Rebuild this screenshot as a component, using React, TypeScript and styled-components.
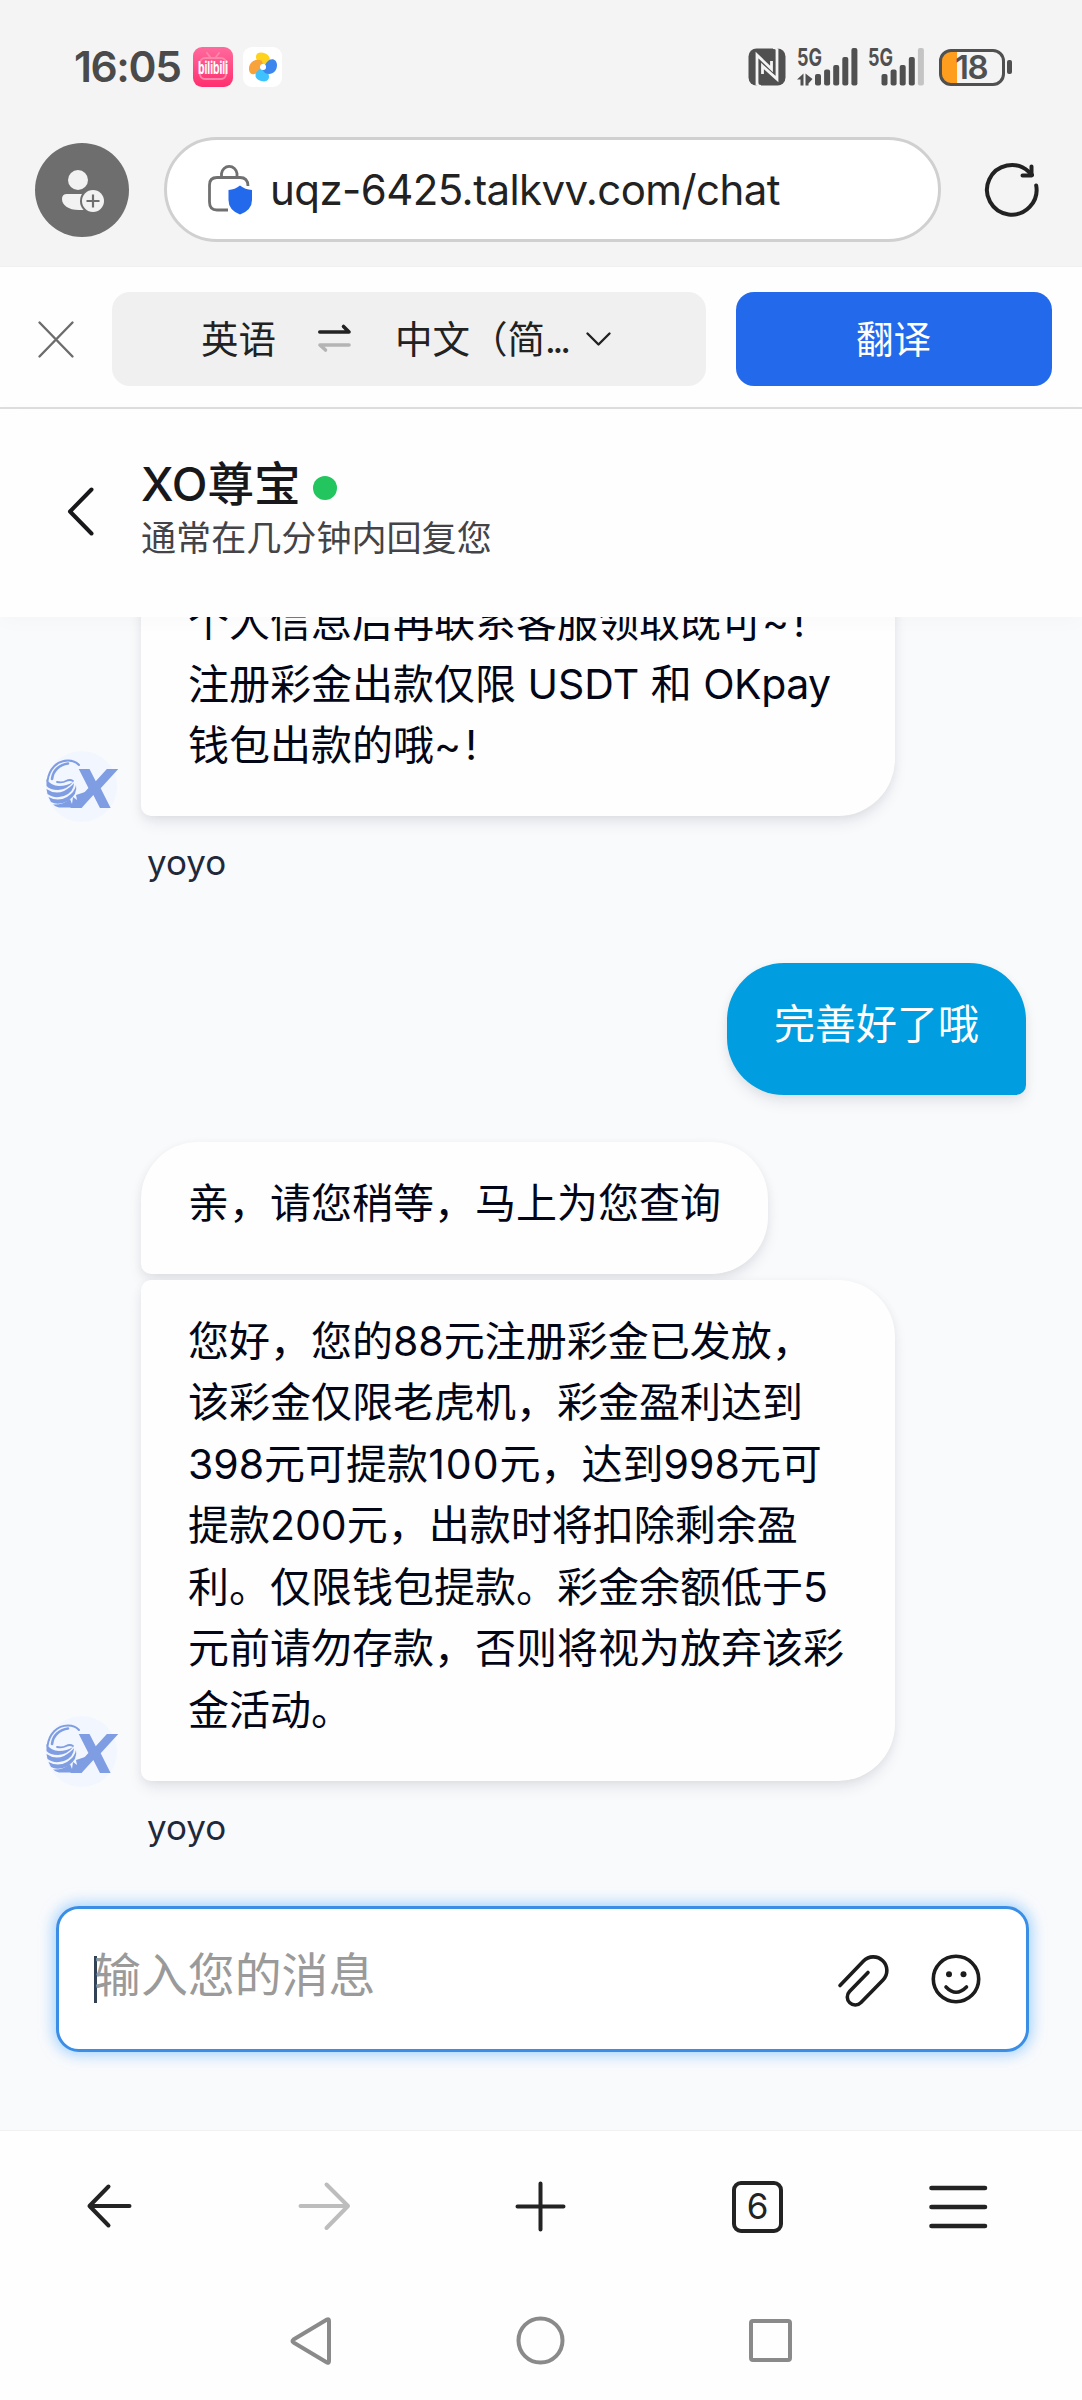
import React from "react";
import styled, { createGlobalStyle } from "styled-components";

const SANS = `Inter, "Noto Sans CJK SC", sans-serif`;

const GlobalStyle = createGlobalStyle`
  * { box-sizing: border-box; }
  body {
    margin: 0;
    background: #fefefe;
    font-family: ${SANS};
    -webkit-font-smoothing: antialiased;
  }
  svg { display: block; flex: none; overflow: visible; }
`;

const Screen = styled.div`
  width: 1082px;
  height: 2400px;
  display: flex;
  flex-direction: column;
  overflow: hidden;
  background: #fefefe;
`;

/* ---------- status bar ---------- */

const BrowserTop = styled.header`
  height: 267px;
  flex: none;
  background: #f4f4f4;
  border-bottom: 1px solid #f0f0f0;
`;

const StatusBar = styled.div`
  height: 134px;
  padding: 0 70px 0 74px;
  display: flex;
  align-items: center;
`;

const Clock = styled.span`
  width: 119px;
  font-size: 42.5px;
  line-height: 60px;
  font-weight: 600;
  letter-spacing: -1.4px;
  color: #4a4a4a;
  white-space: nowrap;
`;

const AppIcons = styled.div`
  display: flex;
  gap: 10px;
  flex: 1;
`;

const StatusIcons = styled.div`
  display: flex;
  align-items: center;
`;

const Signal = styled.div<{ $gap: number }>`
  margin-left: ${(p) => p.$gap}px;
`;

const Battery = styled.div`
  width: 66px;
  height: 37px;
  margin-left: 15px;
  padding-right: 2px;
  border: 3px solid #505050;
  border-radius: 12px;
  display: flex;
  align-items: center;
  justify-content: center;
  background: linear-gradient(90deg, #ff9d1e 15px, transparent 15px);
  color: #505050;
  font-size: 33px;
  line-height: 31px;
  font-weight: 600;
  letter-spacing: -1.6px;
`;

const BatteryTip = styled.i`
  width: 5px;
  height: 14px;
  margin-left: 2px;
  border-radius: 2px;
  background: #505050;
`;

/* ---------- address row ---------- */

const AddressRow = styled.div`
  display: flex;
  align-items: center;
  padding: 3px 42px 0 35px;
`;

const Profile = styled.div`
  width: 94px;
  height: 94px;
  border-radius: 50%;
  background: #6e6e6e;
`;

const AddressPill = styled.div`
  width: 777px;
  height: 105px;
  margin: 0 44px 0 35px;
  padding-left: 41px;
  display: flex;
  align-items: center;
  border: 3px solid #d0d0d0;
  border-radius: 53px;
  background: #fff;
`;

const Url = styled.span`
  margin-left: 16px;
  font-size: 42px;
  letter-spacing: -0.58px;
  color: #222;
  white-space: nowrap;
`;

/* ---------- translate bar ---------- */

const TranslateBar = styled.div`
  height: 142px;
  flex: none;
  display: flex;
  align-items: flex-start;
  padding: 25px 30px 0 38px;
  border-bottom: 2px solid #dedede;
`;

const CloseSlot = styled.div`
  height: 94px;
  width: 74px;
  display: flex;
  align-items: center;
`;

const Languages = styled.div`
  width: 594px;
  height: 94px;
  padding-left: 89px;
  display: flex;
  align-items: center;
  border-radius: 18px;
  background: #f0f0f0;
  color: #222;
  font-size: 37.5px;
  white-space: nowrap;
`;

const Language = styled.span`
  padding-bottom: 5px;
`;

const Ellipsis = styled.span`
  letter-spacing: -3.2px;
`;

const SwapSlot = styled.div`
  margin: 0 44px 0 42px;
`;

const ChevronSlot = styled.div`
  margin-left: 18px;
`;

const TranslateButton = styled.button`
  width: 316px;
  height: 94px;
  margin-left: 30px;
  padding: 0 1px 5px 0;
  border: 0;
  border-radius: 18px;
  background: #2369ec;
  color: #fff;
  font: 400 37.5px ${SANS};
`;

/* ---------- chat header ---------- */

const ChatHeader = styled.div`
  height: 208px;
  flex: none;
  display: flex;
  padding: 46px 0 0 66px;
  position: relative;
  background: #fefefe;
  box-shadow: 0 4px 20px rgba(30, 40, 60, 0.025);
`;

const BackSlot = styled.div`
  width: 75px;
  padding-top: 32px;
`;

const Title = styled.div`
  display: flex;
  align-items: center;
  height: 58px;
  color: #18181b;
  font-size: 46.6px;
  line-height: 58px;
  font-weight: 500;
  white-space: nowrap;
`;

const OnlineDot = styled.i`
  width: 24px;
  height: 24px;
  margin: 8px 0 0 12px;
  border-radius: 50%;
  background: #22c55e;
`;

const Subtitle = styled.div`
  height: 50px;
  color: #434348;
  font-size: 35.1px;
  line-height: 50px;
  white-space: nowrap;
`;

/* ---------- conversation ---------- */

const Conversation = styled.main`
  height: 1514px;
  flex: none;
  display: flex;
  flex-direction: column;
  overflow: hidden;
  background: #f9fafc;
  border-bottom: 1px solid #f1f1f2;
`;

const Incoming = styled.section<{ $top: number }>`
  margin: ${(p) => p.$top}px 0 0 46px;
  display: grid;
  grid-template-columns: 71px auto;
  column-gap: 24px;
  align-items: end;
  flex: none;
`;

const AvatarSlot = styled.div`
  height: 65px;
`;

const Stack = styled.div`
  display: flex;
  flex-direction: column;
  align-items: flex-start;
  gap: 6px;
`;

const Bubble = styled.div<{ $radius: string; $width: number; $mine?: boolean }>`
  width: ${(p) => p.$width}px;
  padding: 31px 0 39.5px 47px;
  border-radius: ${(p) => p.$radius};
  background: ${(p) => (p.$mine ? "#009de0" : "#fefefe")};
  color: ${(p) => (p.$mine ? "#fff" : "#020617")};
  box-shadow: 0 8px 16px -2px rgba(20, 25, 40, 0.09),
    0 2px 10px rgba(20, 25, 40, 0.05);
  font-size: 41px;
  line-height: 61.5px;
  white-space: pre;
`;

const Tracked = styled.span<{ $spacing: number }>`
  letter-spacing: ${(p) => p.$spacing}px;
`;

const Author = styled.div`
  grid-column: 2;
  height: 48px;
  margin: 22px 0 0 6px;
  color: #1e293b;
  font-size: 35px;
  line-height: 48px;
`;

const Outgoing = styled.section`
  margin: 77px 56px 0 0;
  display: flex;
  justify-content: flex-end;
  flex: none;
`;

/* ---------- composer ---------- */

const Composer = styled.div`
  width: 973px;
  height: 146px;
  flex: none;
  margin: 55.5px 0 0 56px;
  padding: 0 45px 0 35px;
  display: flex;
  align-items: center;
  border: 3px solid #3b8ee6;
  border-radius: 23px;
  background: #fff;
  box-shadow: 0 0 14px 3px rgba(110, 185, 255, 0.6);
`;

const Caret = styled.i`
  width: 3px;
  height: 47px;
  margin-right: -3px;
  background: #334155;
`;

const Placeholder = styled.span`
  flex: 1;
  margin-top: -8px;
  color: #9a9a9a;
  font-size: 46.9px;
  line-height: 70px;
  white-space: nowrap;
`;

const ComposerTools = styled.div`
  display: flex;
  gap: 42px;
  padding-top: 2px;
`;

/* ---------- browser toolbar and system keys ---------- */

const Toolbar = styled.nav`
  height: 150px;
  flex: none;
  display: flex;
  align-items: center;
  padding: 0 94px 0 87px;
`;

const ToolSlot = styled.div<{ $left: number }>`
  margin-left: ${(p) => p.$left}px;
`;

const TabCount = styled.div`
  width: 52px;
  height: 52px;
  margin: 2px 0 0 166px;
  display: flex;
  align-items: center;
  justify-content: center;
  border: 4px solid #232323;
  border-radius: 9px;
  color: #232323;
  font-size: 35px;
  line-height: 44px;
  padding-bottom: 3px;
`;

const SystemKeys = styled.nav`
  display: flex;
  align-items: center;
  height: 122px;
  padding-left: 290px;
`;

/* ---------- drawings ---------- */

const BiliIcon = () => (
  <svg width="40" height="40" viewBox="0 0 40 40">
    <defs>
      <linearGradient id="bili" x1="0" y1="0" x2="0" y2="1">
        <stop offset="0" stopColor="#ff6a9d" />
        <stop offset="1" stopColor="#ff2f6f" />
      </linearGradient>
    </defs>
    <rect width="40" height="40" rx="9" fill="url(#bili)" />
    <g fill="none" stroke="#ff86ab" strokeWidth="2" strokeLinecap="round">
      <rect x="7" y="11" width="26" height="21" rx="5" />
      <path d="M14 6l3 4M26 6l-3 4" />
    </g>
    <text x="5" y="27" textLength="30" lengthAdjust="spacingAndGlyphs" fontFamily="Inter, sans-serif" fontWeight="700" fontSize="17" fill="#fff">
      bilibili
    </text>
  </svg>
);

const PinwheelIcon = () => (
  <svg width="39" height="40" viewBox="0 0 39 40">
    <rect width="39" height="40" rx="9" fill="#fff" />
    <path d="M17 17C10 10 13 5.500 18 5.500C25 5.500 28.500 11 26.500 17L23 19Q21 16 17 17Z" fill="#ffd21e" />
    <path d="M18 22C12 30 6 28 6 22C6 15 12 11 18.500 13.500L20 17Q16 18 18 22Z" fill="#f8a23c" />
    <path d="M23 23C29 30 25 34.500 21 34.500C13 34 11 29 13.500 25L18 21Q19 24 23 23Z" fill="#3fc3ff" />
    <path d="M22 18C27 9 34 12 34 18C34 25 28 29 22 26L19.500 23Q24 22 22 18Z" fill="#3d86ee" />
    <circle cx="20" cy="20" r="3" fill="#fff" />
  </svg>
);

const NfcIcon = () => (
  <svg width="38" height="38" viewBox="0 0 38 38">
    <rect x="0.500" y="0.500" width="37" height="37" rx="8" fill="#505050" />
    <path d="M9 37.500V7L23.500 21V13M29 0.500V31L14.500 18V26" fill="none" stroke="#f4f4f4" strokeWidth="2.800" />
    <path d="M9 36V34Q9 38 13 38M29 2Q29 0 25 0" fill="none" stroke="#f4f4f4" strokeWidth="2" />
  </svg>
);

const SignalIcon = ({ data, width }: { data?: boolean; width: number }) => {
  const tops = [26, 21.5, 17, 9, 0];
  const start = data ? 18 : 13.5;
  return (
    <svg width={width} height="38" viewBox={`0 0 ${width} 38`}>
      <text x="0" y="18" textLength="25" lengthAdjust="spacingAndGlyphs" fontFamily="Inter, sans-serif" fontWeight="700" fontSize="24" fill="#505050">
        5G
      </text>
      {tops.map((t, i) => (
        <rect
          key={t}
          x={start + i * 9.1}
          y={t}
          width="6"
          height={37.5 - t}
          rx="2"
          fill={!data && i === 4 ? "#c4c4c4" : "#505050"}
        />
      ))}
      {data && <path d="M0 31.500L6.500 25.500V37.500H3.500V31.500ZM8.500 25.500L15.500 31L11.500 35.500V37.500H8.500Z" fill="#505050" />}
    </svg>
  );
};

const ProfileIcon = () => (
  <svg width="94" height="94" viewBox="0 0 94 94">
    <circle cx="43" cy="37" r="10" fill="#f2f2f2" />
    <path d="M32 51H54V67H44C33 67 27 62 27 56Q27 51 32 51Z" fill="#f2f2f2" />
    <circle cx="58" cy="58" r="13" fill="#6e6e6e" />
    <circle cx="58" cy="58" r="11" fill="#f2f2f2" />
    <path d="M51.500 58H64.500M58 51.500V64.500" stroke="#6e6e6e" strokeWidth="2.200" />
  </svg>
);

const LockShieldIcon = () => (
  <svg width="46" height="51" viewBox="0 0 46 51">
    <path d="M13.500 13V9.500A7.800 8 0 0 1 29 9.500V13" fill="none" stroke="#707070" strokeWidth="2.800" />
    <path d="M40 22C40 16 37 13.500 32 13.500H9C4 13.500 1.500 16 1.500 21V38C1.500 43 4 46 9 46H20" fill="none" stroke="#707070" strokeWidth="2.800" />
    <path d="M32 21.500Q37 25.500 44 26V36Q44 46 32 50.500Q20.500 46 20.500 36V26Q27 25.500 32 21.500Z" fill="#2369ec" />
  </svg>
);

const ReloadIcon = () => (
  <svg width="54" height="54" viewBox="0 0 54 54" fill="none" stroke="#222" strokeWidth="4" strokeLinecap="round" strokeLinejoin="round">
    <path d="M51.200 22.500A24.800 24.800 0 1 1 43.500 8.500L47 12" />
    <path d="M46.500 3.500V12.500H37.500" />
  </svg>
);

const CloseIcon = () => (
  <svg width="36" height="37" viewBox="0 0 36 37" stroke="#6c6c6c" strokeWidth="2.400" strokeLinecap="round">
    <path d="M1.500 1.500L34.500 35.500M34.500 1.500L1.500 35.500" />
  </svg>
);

const SwapIcon = () => (
  <svg width="33" height="30" viewBox="0 0 33 30" fill="none" strokeWidth="3.600" strokeLinecap="round" strokeLinejoin="round">
    <path d="M1.800 8H31L25.500 2.500" stroke="#222" />
    <path d="M31 21H2L7.500 26" stroke="#b4b4b4" />
  </svg>
);

const ChevronIcon = () => (
  <svg width="25" height="14" viewBox="0 0 25 14" fill="none" stroke="#222" strokeWidth="2.400" strokeLinecap="round" strokeLinejoin="round">
    <path d="M1.500 1.500L12.500 12.500L23.500 1.500" />
  </svg>
);

const BackChevron = () => (
  <svg width="28" height="49" viewBox="0 0 28 49" fill="none" stroke="#18181b" strokeWidth="4" strokeLinecap="round" strokeLinejoin="round">
    <path d="M25.500 2.500L4 24.500L25.500 46.500" />
  </svg>
);

const TeamLogo = () => (
  <svg width="71" height="71" viewBox="0 0 71 71">
    <circle cx="35.500" cy="35.500" r="35.500" fill="#f2f6ff" />
    <g fill="none" stroke="#7f9de2" strokeLinecap="round">
      <path d="M1.500 30C3 18 11 9.500 22 9.500Q29 9.500 33 14" strokeWidth="2" />
      <path d="M6 28C7 19 14 13.500 22 12.500" strokeWidth="2.600" />
      <path d="M11 31Q17 32 20 30Q24 28 27 30" strokeWidth="1.800" />
    </g>
    <g fill="#7f9de2">
      <path d="M0.500 28Q5 35 13 35Q21 35 27 31Q22 38 12 39Q4 39 0.500 35Z" />
      <path d="M0.500 38Q9 44 18 40Q25 36 28 32Q28 41 18 45Q8 48 1.500 43Z" />
      <path d="M2.500 46Q12 51 21 46Q29 41 30 34Q32 43 22 50Q12 55 5 51Z" />
      <path d="M7 53.500Q17 54 24 48L26 53L27 46L31 49L30 44L39 41L36 56.500H13Q9 55.500 7 53.500Z" />
    </g>
    <text x="27" y="56.500" textLength="43" lengthAdjust="spacingAndGlyphs" fontFamily="'DejaVu Sans', sans-serif" fontWeight="700" fontStyle="italic" fontSize="54" fill="#7f9de2">
      X
    </text>
  </svg>
);

const ClipIcon = () => (
  <svg width="52" height="52" viewBox="0 0 52 52" fill="none" stroke="#1c1c1c" strokeWidth="3.600" strokeLinecap="round" strokeLinejoin="round">
    <path d="M3 31.500L26.500 7A13.300 13.300 0 0 1 46 26L24 48.500A7.500 7.500 0 0 1 12.500 37.500L31 18.500" />
  </svg>
);

const SmileIcon = () => (
  <svg width="50" height="50" viewBox="0 0 50 50" fill="none" stroke="#1c1c1c" strokeWidth="3.600" strokeLinecap="round">
    <circle cx="25" cy="25" r="22.700" />
    <path d="M15 33Q25 43.500 35.500 33" />
    <circle cx="18" cy="20.200" r="3" fill="#1c1c1c" stroke="none" />
    <circle cx="32.500" cy="20.200" r="3" fill="#1c1c1c" stroke="none" />
  </svg>
);

const ArrowLeftIcon = () => (
  <svg width="46" height="44" viewBox="0 0 46 44" fill="none" stroke="#232323" strokeWidth="4" strokeLinecap="round" strokeLinejoin="round">
    <path d="M42.500 22H2.500M21.500 2.500L2.500 22L21.500 41.500" />
  </svg>
);

const ArrowRightIcon = () => (
  <svg width="53" height="48" viewBox="0 0 53 48" fill="none" stroke="#bdbdbd" strokeWidth="4" strokeLinecap="round" strokeLinejoin="round">
    <path d="M2.500 24H50M28.500 2.500L50 24L28.500 46" />
  </svg>
);

const PlusIcon = () => (
  <svg width="51" height="51" viewBox="0 0 51 51" stroke="#232323" strokeWidth="4" strokeLinecap="round">
    <path d="M2.500 25.500H48.500M25.500 2.500V48.500" />
  </svg>
);

const MenuIcon = () => (
  <svg width="59" height="44" viewBox="0 0 59 44" stroke="#232323" strokeWidth="4.600" strokeLinecap="round">
    <path d="M2.500 4H56M2.500 23H56M2.500 42H56" />
  </svg>
);

const BackKey = () => (
  <svg width="42" height="48" viewBox="0 0 42 48" fill="none" stroke="#8a8a8a" strokeWidth="4" strokeLinejoin="round">
    <path d="M37 2.500Q39 1.500 39 4V44Q39 46.500 37 45.500L3.500 25.500Q1.500 24 3.500 22.500Z" />
  </svg>
);

const HomeKey = () => (
  <svg width="49" height="49" viewBox="0 0 49 49" fill="none" stroke="#8a8a8a" strokeWidth="4">
    <circle cx="24.500" cy="24.500" r="22" />
  </svg>
);

const RecentKey = () => (
  <svg width="43" height="43" viewBox="0 0 43 43" fill="none" stroke="#8a8a8a" strokeWidth="4">
    <rect x="2" y="2" width="39" height="39" rx="2" />
  </svg>
);

/* ---------- content ---------- */

export default function App() {
  return (
    <>
      <GlobalStyle />
      <Screen>
        <BrowserTop>
          <StatusBar>
            <Clock>16:05</Clock>
            <AppIcons>
              <BiliIcon />
              <PinwheelIcon />
            </AppIcons>
            <StatusIcons>
              <NfcIcon />
              <Signal $gap={11}>
                <SignalIcon data width={61} />
              </Signal>
              <Signal $gap={10}>
                <SignalIcon width={56} />
              </Signal>
              <Battery>18</Battery>
              <BatteryTip />
            </StatusIcons>
          </StatusBar>
          <AddressRow>
            <Profile>
              <ProfileIcon />
            </Profile>
            <AddressPill>
              <LockShieldIcon />
              <Url>uqz-6425.talkvv.com/chat</Url>
            </AddressPill>
            <ReloadIcon />
          </AddressRow>
        </BrowserTop>

        <TranslateBar>
          <CloseSlot>
            <CloseIcon />
          </CloseSlot>
          <Languages>
            <Language>英语</Language>
            <SwapSlot>
              <SwapIcon />
            </SwapSlot>
            <Language>
              中文（简<Ellipsis>...</Ellipsis>
            </Language>
            <ChevronSlot>
              <ChevronIcon />
            </ChevronSlot>
          </Languages>
          <TranslateButton>翻译</TranslateButton>
        </TranslateBar>

        <ChatHeader>
          <BackSlot>
            <BackChevron />
          </BackSlot>
          <div>
            <Title>
              XO尊宝
              <OnlineDot />
            </Title>
            <Subtitle>通常在几分钟内回复您</Subtitle>
          </div>
        </ChatHeader>

        <Conversation>
          <Incoming $top={-56}>
            <AvatarSlot>
              <TeamLogo />
            </AvatarSlot>
            <Bubble $width={754} $radius="10px 57px 57px 10px">
              个人信息后再联系客服领取既可<Tracked $spacing={4}>~</Tracked>!{"\n"}
              注册彩金出款仅限 USDT 和 <Tracked $spacing={-0.5}>OKpay</Tracked>
              {"\n"}
              钱包出款的哦<Tracked $spacing={4}>~</Tracked>!
            </Bubble>
            <Author>yoyo</Author>
          </Incoming>

          <Outgoing>
            <Bubble $mine $width={299} $radius="57px 57px 10px 57px">
              完善好了哦
            </Bubble>
          </Outgoing>

          <Incoming $top={46.5}>
            <AvatarSlot>
              <TeamLogo />
            </AvatarSlot>
            <Stack>
              <Bubble $width={627} $radius="57px 57px 57px 10px">
                亲，请您稍等，马上为您查询
              </Bubble>
              <Bubble $width={754} $radius="10px 57px 57px 10px">
                您好，您的88元注册彩金已发放，{"\n"}
                该彩金仅限老虎机，彩金盈利达到{"\n"}
                398元可提款<Tracked $spacing={1}>100</Tracked>元，达到998元可{"\n"}
                提款200元，出款时将扣除剩余盈{"\n"}
                利。仅限钱包提款。彩金余额低于5{"\n"}
                元前请勿存款，否则将视为放弃该彩{"\n"}
                金活动。
              </Bubble>
            </Stack>
            <Author>yoyo</Author>
          </Incoming>

          <Composer>
            <Caret />
            <Placeholder>输入您的消息</Placeholder>
            <ComposerTools>
              <ClipIcon />
              <SmileIcon />
            </ComposerTools>
          </Composer>
        </Conversation>

        <Toolbar>
          <ArrowLeftIcon />
          <ToolSlot $left={165}>
            <ArrowRightIcon />
          </ToolSlot>
          <ToolSlot $left={164}>
            <PlusIcon />
          </ToolSlot>
          <TabCount>6</TabCount>
          <ToolSlot $left={146}>
            <MenuIcon />
          </ToolSlot>
        </Toolbar>
        <SystemKeys>
          <BackKey />
          <ToolSlot $left={184}>
            <HomeKey />
          </ToolSlot>
          <ToolSlot $left={184}>
            <RecentKey />
          </ToolSlot>
        </SystemKeys>
      </Screen>
    </>
  );
}
